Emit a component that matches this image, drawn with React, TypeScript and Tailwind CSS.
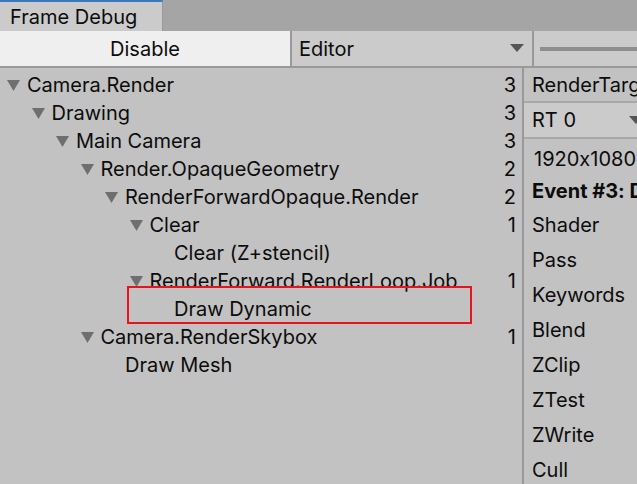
import React from "react";

const tree = [
  { label: "Camera.Render", depth: 0, open: true, count: "3" },
  { label: "Drawing", depth: 1, open: true, count: "3" },
  { label: "Main Camera", depth: 2, open: true, count: "3" },
  { label: "Render.OpaqueGeometry", depth: 3, open: true, count: "2" },
  { label: "RenderForwardOpaque.Render", depth: 4, open: true, count: "2" },
  { label: "Clear", depth: 5, open: true, count: "1" },
  { label: "Clear (Z+stencil)", depth: 6, open: false, count: "" },
  { label: "RenderForward.RenderLoop.Job", depth: 5, open: true, count: "1" },
  { label: "Draw Dynamic", depth: 6, open: false, count: "" },
  { label: "Camera.RenderSkybox", depth: 3, open: true, count: "1" },
  { label: "Draw Mesh", depth: 4, open: false, count: "" },
];

const props = ["Shader", "Pass", "Keywords", "Blend", "ZClip", "ZTest", "ZWrite", "Cull"];

function Arrow() {
  return (
    <svg width="13" height="11" viewBox="0 0 13 11" className="shrink-0">
      <path d="M0 0 H13 L6.5 11 Z" fill="#6f6f6f" />
    </svg>
  );
}

export default function App() {
  return (
    <div
      className="relative flex h-[484px] w-[637px] flex-col overflow-hidden bg-[#c2c2c2] text-[20px] text-[#0c0c0c] [font-feature-settings:'calt'_0]"
      style={{ fontFamily: "Inter, 'Noto Sans', sans-serif" }}
    >
      {/* tab strip */}
      <div className="flex h-[31px] shrink-0 bg-[#a5a5a5]">
        <div className="flex w-[163px] items-center border-r border-[#999] border-t-2 border-t-[#3a79bb] bg-[#cbcbcb] pl-[10px] pt-[1px]">
          Frame Debug
        </div>
      </div>

      {/* toolbar */}
      <div className="flex h-[37px] shrink-0 border-b-2 border-[#999] bg-[#cbcbcb]">
        <div className="flex w-[292px] shrink-0 items-center justify-center border-r-2 border-[#999] bg-[#efefef]">
          Disable
        </div>
        <div className="flex w-[242px] shrink-0 items-center justify-between border-r-2 border-[#999] pl-[7px] pr-[8px]">
          <span>Editor</span>
          <svg width="14" height="9" viewBox="0 0 14 9">
            <path d="M0 0 H14 L7 8 Z" fill="#555" />
          </svg>
        </div>
        <div className="flex flex-1 items-center pl-[6px]">
          <div className="h-[4px] flex-1 bg-[#8e8e8e]" />
        </div>
      </div>

      <div className="flex flex-1">
        {/* event tree */}
        <div className="relative w-[524px] shrink-0 border-r-2 border-[#999] pt-[3px]">
          {tree.map((row) => (
            <div key={row.label} className="flex h-[28px] items-center pr-[6px]">
              <div
                className="flex flex-1 items-center gap-[7px]"
                style={{ paddingLeft: 7 + row.depth * 24.5 }}
              >
                {row.open ? <Arrow /> : <span className="w-[13px]" />}
                <span>{row.label}</span>
              </div>
              <span>{row.count}</span>
            </div>
          ))}
          <div className="absolute left-[127px] top-[218px] h-[38px] w-[345px] border-2 border-[#e5141e]" />
        </div>

        {/* details */}
        <div className="flex min-w-0 flex-1 flex-col whitespace-nowrap">
          <div className="flex h-[35px] items-center border-b-2 border-[#a8a8a8] pl-[8px] pt-[1px]">
            RenderTarget
          </div>
          <div className="flex h-[36px] items-center justify-between border-b-2 border-[#a8a8a8] bg-[#cbcbcb] pl-[8px]">
            <span>RT 0</span>
            <svg width="14" height="9" viewBox="0 0 14 9" className="mr-[-6px]">
              <path d="M0 0 H14 L7 8 Z" fill="#555" />
            </svg>
          </div>
          <div className="flex h-[36px] items-center pl-[10px] pt-[4px]">1920x1080</div>
          <div className="flex h-[32px] items-center pl-[8px] font-bold">Event&nbsp;#3:&nbsp;Draw</div>
          {props.map((p) => (
            <div key={p} className="flex h-[35px] items-center pl-[8px]">
              {p}
            </div>
          ))}
        </div>
      </div>
    </div>
  );
}
